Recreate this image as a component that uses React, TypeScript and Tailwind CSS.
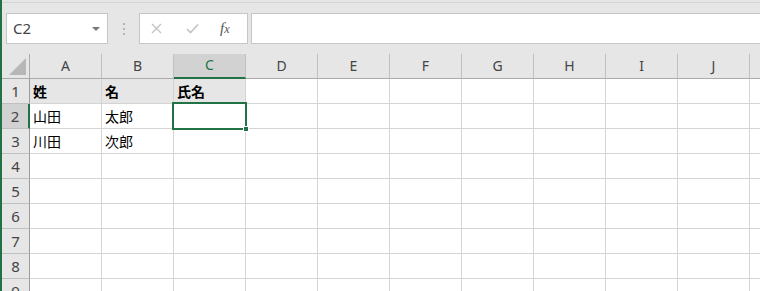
import { FC } from 'react';

const cols = ['A', 'B', 'C', 'D', 'E', 'F', 'G', 'H', 'I', 'J', 'K'];
const rows = [1, 2, 3, 4, 5, 6, 7, 8, 9];

const data: Record<string, string> = {
    A1: '姓', B1: '名', C1: '氏名',
    A2: '山田', B2: '太郎',
    A3: '川田', B3: '次郎',
};

const FormulaBar: FC = () => {
    return (
        <div className="flex items-center h-[31px] mt-[10px]">
            <div className="ml-[4px] w-[102px] h-full bg-white border border-[#c6c6c6] flex items-center justify-between pl-[6px] pr-[7px]">
                <span className="text-[15px] text-[#444]">C2</span>
                <span className="w-0 h-0 border-l-[4px] border-r-[4px] border-t-[4px] border-l-transparent border-r-transparent border-t-[#777]" />
            </div>
            <div className="w-[31px] flex flex-col items-center gap-[3px]">
                <span className="w-[2px] h-[2px] bg-[#b5b5b5]" />
                <span className="w-[2px] h-[2px] bg-[#b5b5b5]" />
                <span className="w-[2px] h-[2px] bg-[#b5b5b5]" />
            </div>
            <div className="w-[109px] h-full bg-white border border-[#c6c6c6] flex items-center">
                <svg className="ml-[11px]" width="11" height="11" viewBox="0 0 11 11">
                    <path d="M1 1 L10 10 M10 1 L1 10" stroke="#c3c3c3" strokeWidth="1.4" fill="none" />
                </svg>
                <svg className="ml-[24px]" width="13" height="11" viewBox="0 0 13 11">
                    <path d="M1 6 L4.5 9.5 L12 1.5" stroke="#c3c3c3" strokeWidth="1.6" fill="none" />
                </svg>
                <span className="ml-[21px] text-[15px] italic text-[#555] font-['Liberation_Serif',serif] leading-none">
                    f<span className="text-[12px]">x</span>
                </span>
            </div>
            <div className="ml-[3px] flex-1 h-full bg-white border border-[#c6c6c6] border-r-0" />
        </div>
    );
};

const App: FC = () => {
    return (
        <div className="w-[760px] h-[291px] overflow-hidden bg-[#e6e6e6] border-l-2 border-[#217346] font-['Noto_Sans',sans-serif]">
            <div className="h-[3px] border-b border-[#d6d6d6]" />
            <FormulaBar />
            <div className="mt-[10px] grid grid-cols-[28px_repeat(11,72px)] auto-rows-[25px] w-[820px]">
                <div className="relative bg-[#e6e6e6] border-r border-b border-[#ababab]">
                    <svg className="absolute right-[3px] bottom-[3px]" width="17" height="17" viewBox="0 0 17 17">
                        <path d="M17 0 L17 17 L0 17 Z" fill="#b7b7b7" />
                    </svg>
                </div>
                {cols.map((c) => (
                    <div key={c}
                        className={c === 'C'
                            ? 'bg-[#d2d2d2] border-r border-[#c0c0c0] border-b-2 border-b-[#217346] flex items-center justify-center text-[14px] text-[#217346] pb-[2px]'
                            : 'bg-[#e6e6e6] border-r border-b border-[#c0c0c0] border-b-[#ababab] flex items-center justify-center text-[14px] text-[#444] pb-[2px]'}>
                        {c === 'K' ? '' : c}
                    </div>
                ))}
                {rows.map((r) => (
                    <Row key={r} r={r} />
                ))}
            </div>
        </div>
    );
};

const Row: FC<{ r: number }> = ({ r }) => {
    return (
        <>
            <div className={r === 2
                ? 'bg-[#d2d2d2] border-b border-[#c0c0c0] border-r-2 border-r-[#217346] flex items-center justify-center text-[15px] text-[#444]'
                : 'bg-[#e6e6e6] border-b border-[#c0c0c0] border-r border-r-[#9b9b9b] flex items-center justify-center text-[15px] text-[#444]'}>
                {r}
            </div>
            {cols.map((c) => {
                const key = c + r;
                const value = data[key];
                const filled = r === 1 && (c === 'A' || c === 'B' || c === 'C');
                return (
                    <div key={key}
                        className={`relative border-r border-b border-[#d4d4d4] px-[3px] text-[14px] leading-[24px] text-black font-['Noto_Sans_CJK_JP',sans-serif] ${filled ? 'bg-[#e7e6e6] font-bold' : 'bg-white'} ${key === 'C2' ? 'z-10' : ''}`}>
                        {value}
                        {key === 'C2' && (
                            <div className="absolute left-[-2px] top-[-2px] w-[75px] h-[28px] border-2 border-[#217346]">
                                <span className="absolute right-[-4px] bottom-[-4px] w-[6px] h-[6px] bg-[#217346] border border-white" />
                            </div>
                        )}
                    </div>
                );
            })}
        </>
    );
};

export default App;
